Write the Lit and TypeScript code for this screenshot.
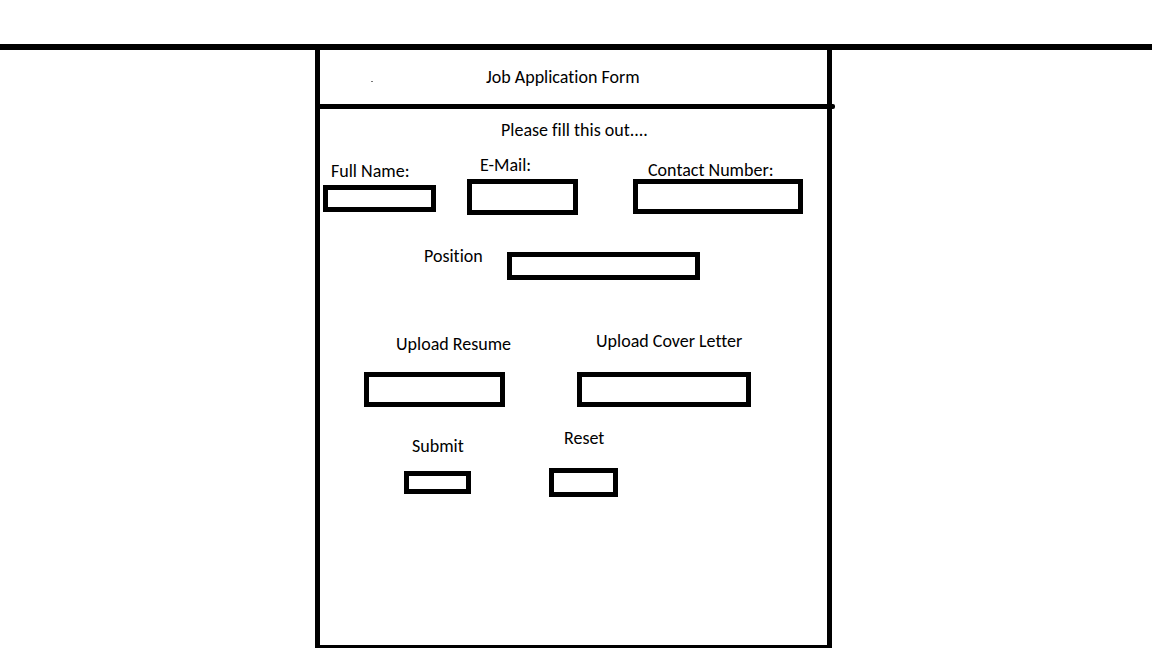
import { LitElement, html, css } from "lit";
import { customElement } from "lit/decorators.js";

@customElement("app-root")
export class AppRoot extends LitElement {
  static styles = css`
    :host {
      display: flex;
      flex-direction: column;
      min-height: 100vh;
      box-sizing: border-box;
      padding-top: 44px;
      background: #fff;
      color: #000;
      font-family: Calibri, Carlito, Lato, sans-serif;
      font-size: 18px;
      font-variant-ligatures: none;
      line-height: 18px;
    }
    * {
      box-sizing: border-box;
    }
    .rule {
      height: 6px;
      background: #000;
    }
    .page {
      flex: 1;
      display: flex;
      justify-content: center;
      padding-right: 5px;
    }
    .panel {
      width: 100%;
      max-width: 517px;
      border: 5px solid #000;
      border-top: 0;
      border-bottom-width: 3px;
    }
    .header {
      position: relative;
      display: flex;
      align-items: center;
      height: 59px;
      padding-left: 51px;
      border-bottom: 5px solid #000;
    }
    .header::after {
      content: "";
      position: absolute;
      right: -8px;
      bottom: -5px;
      width: 8px;
      height: 5px;
      border-radius: 0 2px 2px 0;
      background: #000;
    }
    .speck {
      width: 2px;
      height: 1px;
      margin: 8px 113px 0 0;
      background: #777;
    }
    h1,
    p {
      margin: 0;
      font-size: inherit;
      font-weight: 400;
    }
    .intro {
      padding: 12px 0 17px 181px;
    }
    .row {
      display: flex;
      flex-wrap: wrap;
      align-items: flex-start;
    }
    .contact {
      padding-left: 3px;
      margin-bottom: 32px;
    }
    .job {
      padding-left: 104px;
      margin-bottom: 52px;
    }
    .uploads {
      align-items: flex-end;
      padding-left: 44px;
      gap: 72px;
      margin-bottom: 22px;
    }
    .actions {
      padding-left: 84px;
      gap: 78px;
    }
    .field {
      display: flex;
      flex-direction: column;
      gap: 5px;
    }
    .name {
      width: 113px;
      margin-right: 31px;
      padding-top: 6px;
    }
    .email {
      width: 111px;
      margin-right: 55px;
    }
    .phone {
      width: 170px;
      padding-top: 5px;
      gap: 0;
    }
    .position {
      flex-direction: row;
      gap: 0;
    }
    .position label {
      width: 83px;
    }
    .position input {
      width: 193px;
      margin-top: 5px;
    }
    .resume {
      width: 141px;
      gap: 19px;
    }
    .cover {
      width: 174px;
      gap: 22px;
    }
    .submit {
      width: 67px;
      padding-top: 8px;
      gap: 16px;
    }
    .reset {
      width: 69px;
      gap: 21px;
    }
    .name label,
    .submit label {
      padding-left: 8px;
    }
    .email label {
      padding-left: 13px;
    }
    .phone label,
    .reset label {
      padding-left: 15px;
    }
    .resume label {
      padding-left: 32px;
    }
    .cover label {
      padding-left: 19px;
    }
    label {
      white-space: nowrap;
    }
    input,
    button {
      width: 100%;
      height: 35px;
      margin: 0;
      padding: 0 4px;
      border: 5px solid #000;
      border-radius: 0;
      background: #fff;
      color: inherit;
      font: inherit;
    }
    .name input {
      height: 27px;
    }
    .email input {
      height: 36px;
    }
    .position input {
      height: 28px;
    }
    .submit button {
      height: 23px;
    }
    .reset button {
      height: 29px;
    }
    input[type="file"] {
      font-size: 0;
    }
    input[type="file"]::file-selector-button {
      display: none;
    }
  `;

  render() {
    return html`
      <div class="rule"></div>
      <div class="page">
        <main class="panel">
          <header class="header">
            <span class="speck"></span>
            <h1>Job Application Form</h1>
          </header>
          <form @submit=${(e: Event) => e.preventDefault()}>
            <p class="intro">Please fill this out....</p>
            <div class="row contact">
              <div class="field name">
                <label for="name">Full Name:</label>
                <input id="name" type="text" />
              </div>
              <div class="field email">
                <label for="email">E-Mail:</label>
                <input id="email" type="email" />
              </div>
              <div class="field phone">
                <label for="phone">Contact Number:</label>
                <input id="phone" type="tel" />
              </div>
            </div>
            <div class="row job">
              <div class="field position">
                <label for="position">Position</label>
                <input id="position" type="text" />
              </div>
            </div>
            <div class="row uploads">
              <div class="field resume">
                <label for="resume">Upload Resume</label>
                <input id="resume" type="file" />
              </div>
              <div class="field cover">
                <label for="cover">Upload Cover Letter</label>
                <input id="cover" type="file" />
              </div>
            </div>
            <div class="row actions">
              <div class="field submit">
                <label for="submit">Submit</label>
                <button id="submit" type="submit"></button>
              </div>
              <div class="field reset">
                <label for="reset">Reset</label>
                <button id="reset" type="reset"></button>
              </div>
            </div>
          </form>
        </main>
      </div>
    `;
  }
}
